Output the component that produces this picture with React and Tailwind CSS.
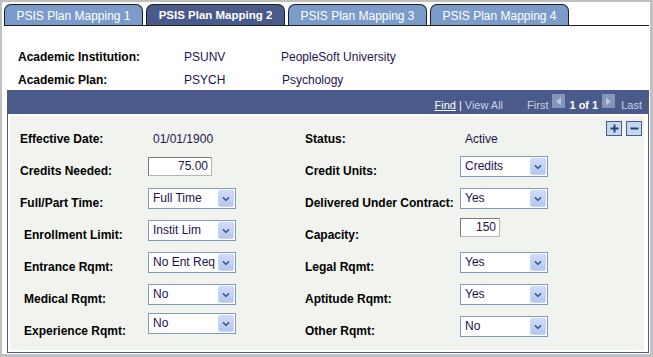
import React from "react";

const tabs = ["PSIS Plan Mapping 1", "PSIS Plan Mapping 2", "PSIS Plan Mapping 3", "PSIS Plan Mapping 4"];

const Select = ({ value, className = "" }) => (
  <div className={`flex h-[21px] w-[88px] border border-[#7f9db9] bg-white ${className}`}>
    <span className="flex-1 overflow-hidden whitespace-nowrap pl-[4px] text-[12px] leading-[19px] text-[#1e1250]">
      {value}
    </span>
    <span className="m-[1px] flex w-[16px] items-center justify-center rounded-[2px] border border-[#c9d7fa] bg-linear-to-b from-[#cfdcfb] to-[#b3c7f3]">
      <svg width="8" height="6" viewBox="0 0 8 6">
        <path d="M1 1.3 L4 4.3 L7 1.3" stroke="#4d6185" strokeWidth="1.7" fill="none" />
      </svg>
    </span>
  </div>
);

const Input = ({ value, width, className = "" }) => (
  <div
    className={`h-[19px] border border-[#b5b5b5] border-t-[#7a7a7a] border-l-[#7a7a7a] bg-white pr-[3px] text-right text-[12px] leading-[17px] text-[#1e1250] ${width} ${className}`}
  >
    {value}
  </div>
);

const Value = ({ children }) => (
  <div className="pt-[8px] pl-[5px] text-[12px] leading-[15px] text-[#1e1250]">{children}</div>
);

const rows = [
  { label: "Effective Date:", left: <Value>01/01/1900</Value>, rlabel: "Status:", right: <Value>Active</Value> },
  {
    label: "Credits Needed:",
    left: <Input value="75.00" width="w-[64px]" className="mt-[1px]" />,
    rlabel: "Credit Units:",
    right: <Select value="Credits" />,
  },
  { label: "Full/Part Time:", left: <Select value="Full Time" />, rlabel: "Delivered Under Contract:", right: <Select value="Yes" /> },
  {
    label: "Enrollment Limit:",
    indent: true,
    left: <Select value="Instit Lim" />,
    rlabel: "Capacity:",
    right: <Input value="150" width="w-[40px]" className="mt-[-2px]" />,
  },
  { label: "Entrance Rqmt:", indent: true, left: <Select value="No Ent Req" />, rlabel: "Legal Rqmt:", right: <Select value="Yes" /> },
  { label: "Medical Rqmt:", indent: true, left: <Select value="No" />, rlabel: "Aptitude Rqmt:", right: <Select value="Yes" /> },
  {
    label: "Experience Rqmt:",
    indent: true,
    left: <Select value="No" className="mt-[-3px]" />,
    rlabel: "Other Rqmt:",
    right: <Select value="No" />,
  },
];

const ArrowBox = ({ dir }) => (
  <span className="mt-[4px] flex h-[14px] w-[13px] items-center justify-center bg-[#8595b8]">
    <svg width="7" height="9" viewBox="0 0 7 9">
      {dir === "left" ? (
        <path d="M6 0.5 L1 4.5 L6 8.5 Z" fill="#b9c5dd" />
      ) : (
        <path d="M1 0.5 L6 4.5 L1 8.5 Z" fill="#b9c5dd" />
      )}
    </svg>
  </span>
);

const App = () => {
  return (
    <div className="h-[357px] w-[653px] border-t-2 border-l-2 border-r-[3px] border-b-[3px] border-[#c0c0c0] bg-white font-['Liberation_Sans',Arial,sans-serif] text-black">
      <div className="mt-[2px] mr-[1px] ml-[2px] flex gap-[3px] border-b border-[#1e1e1e]">
        {tabs.map((t, i) => (
          <div
            key={t}
            className={`flex h-[21px] w-[139px] items-center justify-center rounded-t-[7px] border border-b-0 border-[#1e1e1e] pt-[2px] text-white ${
              i === 1 ? "bg-[#4a5a8a] text-[11.5px] font-bold" : "bg-[#7b9cca] text-[12px]"
            }`}
          >
            {t}
          </div>
        ))}
      </div>

      <div className="mt-[20px] pl-[16px] text-[12px]">
        <div className="flex h-[22px] items-center">
          <div className="w-[166px] font-bold">Academic Institution:</div>
          <div className="w-[97px] text-[#1e1250]">PSUNV</div>
          <div className="text-[#1e1250]">PeopleSoft University</div>
        </div>
        <div className="flex h-[22px] items-center pt-[2px]">
          <div className="w-[166px] font-bold">Academic Plan:</div>
          <div className="w-[98px] text-[#1e1250]">PSYCH</div>
          <div className="text-[#1e1250]">Psychology</div>
        </div>
      </div>

      <div className="mr-[1px] ml-[5px] border border-t-0 border-[#4a5a8a]">
        <div className="flex h-[24px] items-start justify-end bg-[#4a5a8a] pr-[6px] text-[11px] leading-[16px]">
          <span className="mt-[7px] text-white underline">Find</span>
          <span className="mt-[7px] ml-[3px] text-white">|</span>
          <span className="mt-[7px] ml-[3px] text-[#c9d1e3]">View All</span>
          <span className="mt-[7px] ml-[24px] text-[#c9d1e3]">First</span>
          <span className="ml-[4px]">
            <ArrowBox dir="left" />
          </span>
          <span className="mt-[7px] ml-[4px] font-bold text-white">1 of 1</span>
          <span className="ml-[4px]">
            <ArrowBox dir="right" />
          </span>
          <span className="mt-[7px] ml-[6px] text-[#c9d1e3]">Last</span>
        </div>

        <div className="p-[2px] pr-[4px]">
          <div className="relative bg-[#f1f3ee] pt-[8px] pb-[2px]">
            <div className="absolute top-[5px] right-[2px] flex gap-[4px]">
              <span className="flex h-[15px] w-[16px] items-center justify-center border border-[#4a5a8a] bg-[#c7d6f0]">
                <svg width="9" height="9" viewBox="0 0 9 9">
                  <path d="M4.5 0.5 V8.5 M0.5 4.5 H8.5" stroke="#2f3f75" strokeWidth="2" />
                </svg>
              </span>
              <span className="flex h-[15px] w-[16px] items-center justify-center border border-[#4a5a8a] bg-[#c7d6f0]">
                <svg width="9" height="9" viewBox="0 0 9 9">
                  <path d="M0.5 4.5 H8.5" stroke="#2f3f75" strokeWidth="2" />
                </svg>
              </span>
            </div>

            {rows.map((r) => (
              <div key={r.label} className="flex h-[32px] items-start">
                <div
                  className={`w-[138px] pt-[8px] text-[12px] leading-[15px] font-bold ${
                    r.indent ? "pl-[14px]" : "pl-[10px]"
                  }`}
                >
                  {r.label}
                </div>
                <div className="w-[157px]">{r.left}</div>
                <div className="w-[155px] pt-[8px] text-[12px] leading-[15px] font-bold">{r.rlabel}</div>
                <div>{r.right}</div>
              </div>
            ))}
          </div>
        </div>
      </div>
    </div>
  );
};

export default App;
